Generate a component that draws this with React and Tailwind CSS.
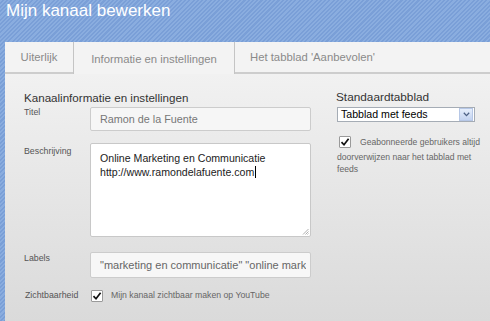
import React from "react";

function Check({ className = "" }) {
  return (
    <span
      className={
        "inline-flex items-center justify-center w-[12px] h-[12px] bg-white border border-[#9a9a9a] rounded-[1px] shrink-0 " +
        className
      }
    >
      <svg width="10" height="10" viewBox="0 0 10 10">
        <path d="M1.5 5.2 L4 7.8 L8.6 1.8" fill="none" stroke="#111" strokeWidth="1.7" />
      </svg>
    </span>
  );
}

export default function App() {
  return (
    <div
      className="w-[490px] h-[321px] overflow-hidden flex flex-col bg-[image:repeating-linear-gradient(135deg,#8aaddf_0px,#8aaddf_1.5px,#7a9fd7_1.5px,#7a9fd7_3px)]"
      style={{ fontFamily: '"Liberation Sans", Arial, sans-serif' }}
    >
      <div className="h-[42px] shrink-0 pl-[6px] pt-[1px] text-[17px] leading-[20px] text-white">
        Mijn kanaal bewerken
      </div>
      <div className="ml-[5px] flex-1 flex flex-col min-h-0">
        {/* tabs */}
        <div className="h-[32px] shrink-0 flex text-[11.3px] text-[#8a8a8a]">
          <div className="w-[68px] bg-[#f3f3f3] border-b-2 border-[#cdcdcd] flex items-center justify-center pt-[1px]">
            Uiterlijk
          </div>
          <div className="w-[162px] bg-[#f3f3f3] border-l border-r border-[#c4c4c4] flex items-center justify-center pt-[2px]">
            Informatie en instellingen
          </div>
          <div className="flex-1 bg-[#f3f3f3] border-b-2 border-[#cdcdcd] flex items-center pl-[15px] pt-[1px]">
            Het tabblad 'Aanbevolen'
          </div>
        </div>
        {/* body */}
        <div className="flex-1 bg-linear-to-b from-[#f1f1f1] to-[#dadada] flex pl-[19px] pt-[15px]">
          {/* left column */}
          <div className="w-[287px] flex flex-col">
            <div className="h-[17px] text-[11.6px] leading-[17px] text-[#333]">
              Kanaalinformatie en instellingen
            </div>
            <div className="flex mt-[1px]">
              <div className="w-[66px] text-[8.8px] leading-[10px] text-[#555]">Titel</div>
              <div className="w-[221px] h-[24px] bg-[#f6f6f6] border border-[#cccccc] rounded-[2px] flex items-center pl-[9px] text-[10.8px] text-[#777]">
                Ramon de la Fuente
              </div>
            </div>
            <div className="flex mt-[12px]">
              <div className="w-[66px] text-[8.8px] leading-[10px] text-[#555] pt-[3px]">Beschrijving</div>
              <div className="w-[221px] h-[94px] bg-white border border-[#c8c8c8] rounded-[2px] pl-[9px] pt-[7px] text-[10.6px] leading-[14px] text-[#222] relative">
                <div>Online Marketing en Communicatie</div>
                <div className="flex items-center">
                  http://www.ramondelafuente.com
                  <span className="inline-block w-[1px] h-[12px] bg-black ml-[1px]"></span>
                </div>
                <svg className="absolute right-[1px] bottom-[1px]" width="7" height="7" viewBox="0 0 7 7">
                  <path d="M6.5 1 L1 6.5 M6.5 3.5 L3.5 6.5 M6.5 5.5 L5.5 6.5" stroke="#999" strokeWidth="0.8" />
                </svg>
              </div>
            </div>
            <div className="flex mt-[15px]">
              <div className="w-[66px] text-[8.8px] leading-[10px] text-[#555] pt-[1px]">Labels</div>
              <div className="w-[221px] h-[26px] bg-[#f7f7f7] border border-[#cccccc] rounded-[2px] flex items-center pl-[9px] pr-[4px] text-[11px] text-[#666] overflow-hidden whitespace-nowrap">
                <span className="overflow-hidden">"marketing en communicatie" "online marke</span>
              </div>
            </div>
            <div className="flex items-center mt-[12px] h-[12px]">
              <div className="w-[67px] text-[8.8px] leading-[10px] text-[#555] pl-[1px] -mt-[2px]">Zichtbaarheid</div>
              <Check />
              <span className="ml-[8px] text-[8.7px] text-[#666] whitespace-nowrap">Mijn kanaal zichtbaar maken op YouTube</span>
            </div>
          </div>
          {/* right column */}
          <div className="w-[138px] ml-[26px] flex flex-col">
            <div className="h-[17px] text-[11.8px] leading-[17px] text-[#333] -ml-[1px]">Standaardtabblad</div>
            <div className="mt-[1px] h-[15px] bg-white border border-[#a5acb5] flex items-center">
              <span className="flex-1 pl-[3px] text-[10.6px] text-black">Tabblad met feeds</span>
              <span className="w-[14px] h-[13px] mr-[1px] bg-linear-to-b from-[#e6eefc] to-[#c3d3f0] border border-[#b6c7e6] flex items-center justify-center">
                <svg width="7" height="5" viewBox="0 0 7 5">
                  <path d="M0.8 0.8 L3.5 3.6 L6.2 0.8" fill="none" stroke="#4d6185" strokeWidth="1.3" />
                </svg>
              </span>
            </div>
            <div className="mt-[14px] text-[8.6px] text-[#666] whitespace-nowrap">
              <div className="flex items-center h-[12px]">
                <Check className="ml-[2px]" />
                <span className="ml-[9px]">Geabonneerde gebruikers altijd</span>
              </div>
              <div className="leading-[12px] mt-[3px]">doorverwijzen naar het tabblad met</div>
              <div className="leading-[12px]">feeds</div>
            </div>
          </div>
        </div>
      </div>
    </div>
  );
}
